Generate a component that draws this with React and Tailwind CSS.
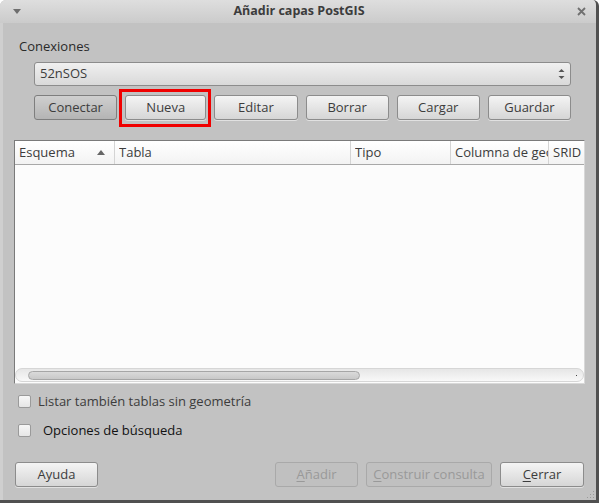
import React from 'react';

const cols = [
  { label: 'Esquema', w: 'w-[100px]', sort: true },
  { label: 'Tabla', w: 'w-[236px]' },
  { label: 'Tipo', w: 'w-[100px]' },
  { label: 'Columna de geometría', w: 'w-[98px]' },
  { label: 'SRID', w: 'flex-1' },
];

function Btn({ children, pressed, disabled, className = '' }) {
  let look = 'border-[#8c8c8c] bg-gradient-to-b from-[#f4f4f4] to-[#d6d6d6] text-[#3c3c3c] shadow-[0_1px_0_rgba(255,255,255,0.5)]';
  if (pressed) look = 'border-[#7e7e7e] bg-gradient-to-b from-[#cfcfcf] to-[#b4b4b4] text-[#3c3c3c]';
  if (disabled) look = 'border-[#a9a9a9] bg-[#c0c0c0] text-[#999999]';
  return (
    <div className={`h-[25px] flex items-center justify-center rounded-[3px] border text-[13px] ${look} ${className}`}>
      {children}
    </div>
  );
}

function Check({ children, className = '', textClass = '' }) {
  return (
    <div className={`h-[16px] flex items-center ${className}`}>
      <div className="w-[13px] h-[13px] rounded-[2px] border border-[#9a9a9a] bg-gradient-to-b from-[#f7f7f7] to-[#e6e6e6]" />
      <span className={`text-[13px] leading-[16px] ${textClass}`}>{children}</span>
    </div>
  );
}

export default function App() {
  return (
    <div className="w-[599px] h-[503px] bg-[#c2c2c2] flex flex-col rounded-t-[6px] overflow-hidden border-r-[3px] border-b-[3px] border-[#505050] font-['Open_Sans','Noto_Sans',sans-serif] text-[#3c3c3c]">
      {/* title bar */}
      <div className="h-[23px] shrink-0 flex items-center bg-gradient-to-b from-[#dedede] to-[#cbcbcb] relative">
        <svg width="8" height="5" viewBox="0 0 8 5" className="ml-[13px]">
          <path d="M0 0 L8 0 L4 5 Z" fill="#6e6e6e" />
        </svg>
        <div className="flex-1 text-center font-bold text-[12.5px] text-[#3c3c3c]">Añadir capas PostGIS</div>
        <svg width="9" height="9" viewBox="0 0 9 9" className="mr-[10px]">
          <path d="M1 1 L8 8 M8 1 L1 8" stroke="#707070" strokeWidth="1.8" />
        </svg>
      </div>

      <div className="flex-1 flex flex-col border-l-[3px] border-[#cfcfcf] relative">
        <div className="mt-[14px] ml-[16px] text-[13px] leading-[18px] text-[#2a2a2a]">Conexiones</div>

        {/* combo */}
        <div className="mt-[7px] ml-[31px] w-[537px] h-[24px] rounded-[3px] border border-[#8c8c8c] bg-gradient-to-b from-[#f0f0f0] to-[#d9d9d9] flex items-center pl-[5px] pr-[5px]">
          <span className="flex-1 text-[13px]">52nSOS</span>
          <svg width="7" height="12" viewBox="0 0 7 12">
            <path d="M0.5 4 L3.5 1 L6.5 4 Z" fill="#555" />
            <path d="M0.5 8 L3.5 11 L6.5 8 Z" fill="#555" />
          </svg>
        </div>

        {/* connection buttons */}
        <div className="mt-[9px] ml-[31px] w-[537px] flex gap-[8px]">
          <Btn pressed className="flex-1">Conectar</Btn>
          <div className="flex-1 relative">
            <Btn>Nueva</Btn>
            <div className="absolute -left-[6px] -right-[5px] -top-[6px] -bottom-[7px] border-[3px] border-[#f00000]" />
          </div>
          <Btn className="flex-1">Editar</Btn>
          <Btn className="flex-1">Borrar</Btn>
          <Btn className="flex-1">Cargar</Btn>
          <Btn className="flex-1">Guardar</Btn>
        </div>

        {/* table */}
        <div className="mt-[20px] ml-[11px] w-[571px] h-[244px] border border-[#7a7a7a] border-b-[#d8d8d8] border-r-[#d8d8d8] bg-[#fcfcfc] flex flex-col">
          <div className="h-[24px] flex border-b border-[#a8a8a8] bg-gradient-to-b from-[#ffffff] to-[#f3f3f3]">
            {cols.map((c, i) => (
              <div key={c.label} className={`${c.w} shrink-0 flex items-center pl-[4px] overflow-hidden whitespace-nowrap text-[13px] ${i < cols.length - 1 ? 'border-r border-[#d4d4d4]' : ''}`}>
                <span className="flex-1 overflow-hidden">{c.label}</span>
                {c.sort && (
                  <svg width="8" height="5" viewBox="0 0 8 5" className="mr-[9px]">
                    <path d="M0 5 L8 5 L4 0 Z" fill="#666" />
                  </svg>
                )}
              </div>
            ))}
          </div>
          <div className="flex-1" />
          <div className="h-[14px] mb-[1px] rounded-full bg-gradient-to-b from-[#e6e6e6] to-[#f8f8f8] border border-[#d6d6d6] flex items-center pl-[12px] pr-[4px]">
            <div className="w-[332px] h-[9px] rounded-full border border-[#a6a6a6] bg-gradient-to-b from-[#dadada] to-[#c8c8c8]" />
            <div className="flex-1" />
            <div className="w-[1px] h-[1px] bg-[#444] mr-[2px]" />
          </div>
        </div>

        <Check className="mt-[9px] ml-[15px]" textClass="ml-[7px] text-[#3c3c3c]">Listar también tablas sin geometría</Check>
        <Check className="mt-[13px] ml-[15px]" textClass="ml-[12px] text-[#111111]">Opciones de búsqueda</Check>

        {/* bottom buttons */}
        <div className="mt-[24px] ml-[12px] w-[569px] flex">
          <Btn className="w-[83px]">Ayuda</Btn>
          <div className="flex-1" />
          <Btn disabled className="w-[83px]"><span className="underline underline-offset-2">A</span>ñadir</Btn>
          <Btn disabled className="w-[126px] ml-[8px]"><span className="underline underline-offset-2">C</span>onstruir consulta</Btn>
          <Btn className="w-[84px] ml-[8px]"><span className="underline underline-offset-2">C</span>errar</Btn>
        </div>

        {/* resize grip */}
        <svg width="10" height="10" viewBox="0 0 10 10" className="absolute right-[1px] bottom-[1px]">
          {[[8, 2], [8, 5], [5, 5], [8, 8], [5, 8], [2, 8]].map(([x, y]) => (
            <rect key={`${x}-${y}`} x={x} y={y} width="1" height="1" fill="#9a9a9a" />
          ))}
        </svg>
      </div>
    </div>
  );
}
